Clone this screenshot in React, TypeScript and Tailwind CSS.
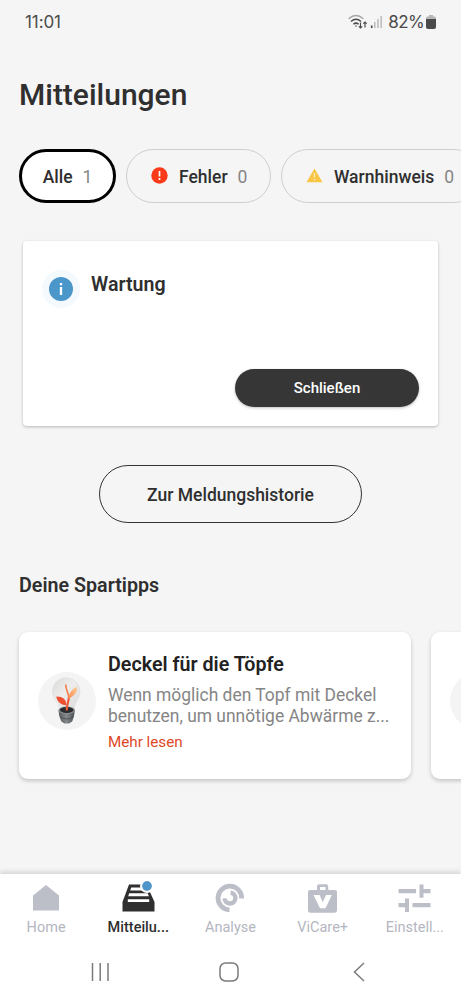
import type { ReactNode } from "react";

const HomeIcon = () => (
  <svg width="26" height="26" viewBox="0 0 26 26" fill="currentColor">
    <path d="M13 0 26 10.5V25.5H0V10.5Z" />
  </svg>
);

const InboxIcon = () => (
  <svg width="33" height="28" viewBox="0 0 33 28" fill="currentColor">
    <path d="M7 0.5H19.5A6 6 0 0 0 25.5 7H27.5L32.5 18V27.5H0.5V18Z" />
    <path d="M9.2 3.6H20L21.5 6.6H8.2ZM7.2 9.2H25.8L26.8 12.2H6.2ZM5.8 15.2H27.2V18H5.8Z" fill="#fff" />
  </svg>
);

const AnalyseIcon = () => (
  <svg width="30" height="30" viewBox="0 0 30 30" fill="none" stroke="currentColor" strokeWidth="4.8">
    <path d="M26.6 15.5A11.8 11.8 0 1 0 14.5 26.8" />
    <path d="M15.6 9.8A5.4 5.4 0 1 1 9.6 15.4" strokeWidth="4.4" />
  </svg>
);

const ViCareIcon = () => (
  <svg width="29" height="29" viewBox="0 0 29 29" fill="currentColor">
    <path fillRule="evenodd" d="M9 6V2.5Q9 .3 11.2.3H18Q20.2.3 20.2 2.5V6H27Q29 6 29 8V26.5Q29 28.8 26.7 28.8H2.3Q0 28.8 0 26.5V8Q0 6 2 6ZM12 6H17.5V3H12Z" />
    <path d="M5.5 11H11.6L14.8 18.3 18 11H23.8L17.5 24.3H12Z" fill="#fff" />
  </svg>
);

const SettingsIcon = () => (
  <svg width="33" height="29" viewBox="0 0 33 29" fill="currentColor">
    <path d="M.5 5H18V9.3H.5ZM21.5.5H25.5V5H32.5V9.3H25.5V13.8H21.5ZM7 14.5H11V28H7V23.3H.5V19H7ZM14.5 19H32.5V23.3H14.5Z" />
  </svg>
);

const BulbPlant = () => (
  <svg width="58" height="58" viewBox="0 0 58 58">
    <defs>
      <linearGradient id="glass" x1="0" y1="0" x2="1" y2="1">
        <stop offset="0" stopColor="#dadada" />
        <stop offset=".45" stopColor="#eeedec" />
        <stop offset="1" stopColor="#dadada" />
      </linearGradient>
      <linearGradient id="leaf" x1="1" y1="0" x2="0" y2="1">
        <stop offset="0" stopColor="#ffcb96" />
        <stop offset="1" stopColor="#f58a50" />
      </linearGradient>
      <linearGradient id="pot">
        <stop offset="0" stopColor="#55595c" />
        <stop offset=".5" stopColor="#85898b" />
        <stop offset="1" stopColor="#4a4f52" />
      </linearGradient>
    </defs>
    <circle cx="29" cy="29" r="29" fill="#f4f4f4" />
    <path d="M21.5 38C21.5 30 14.5 27 14.5 19.5A13.7 13.7 0 0 1 42 19.5C42 27 36 30 36 38Z" fill="url(#glass)" stroke="#dcdcdc" strokeWidth=".6" />
    <path d="M20.5 38.5H36.8L36 44 34.2 49.5 31 51.5H26.5L23.3 49.5 21.3 44Z" fill="url(#pot)" />
    <ellipse cx="28.7" cy="38.3" rx="8.2" ry="3.8" fill="#8b8f91" />
    <ellipse cx="28.7" cy="38" rx="6.9" ry="2.9" fill="#292c2e" />
    <path d="M22 45Q29 49 35.5 45" fill="none" stroke="#44494c" strokeWidth=".8" />
    <path d="M28.8 38.5C28.5 32 31 29 31 24.5" fill="none" stroke="#ee5738" strokeWidth="2.2" />
    <path d="M31 26.5C30.8 21 28 19 27.7 12.5" fill="none" stroke="#f3854f" strokeWidth="1.7" />
    <path d="M30.8 27C30.5 20.5 35 16.5 38.8 15 40 21 35.5 23.5 30.8 27Z" fill="url(#leaf)" />
    <path d="M28.5 33.3C22 33 19 29 18.3 24.5 24.5 24.3 28 27 28.5 33.3Z" fill="#ef5030" />
  </svg>
);

const StatusBar = () => (
  <header className="flex h-11 items-center justify-between pl-[25px] pr-[25px] text-[#4b4b4b]">
    <span className="mt-0.5 font-['Inter'] text-[17px] tracking-[-0.1px]">11:01</span>
    <div className="flex items-center">
      <svg className="mr-1" width="36" height="16" viewBox="0 0 36 16" fill="none" stroke="currentColor" strokeWidth="1.5">
        <path d="M.7 4.7Q8-1.8 15.3 4.7" stroke="#a6a6a6" />
        <path d="M3 7.5Q8 3 13 7.5M5.4 10.2Q8 8 10.6 10.2" />
        <circle cx="8" cy="12" r=".8" fill="currentColor" stroke="none" />
        <path d="M12.5 8.5V14M10.8 12.3 12.5 14 14.2 12.3M17 13.5V8M15.3 9.7 17 8 18.7 9.7" strokeWidth="1.2" />
        <path d="M23.7 11.5V14" strokeWidth="1.7" />
        <path d="M26.8 8V14M30 5V14M33.2 2V14" stroke="#bbb" />
      </svg>
      <span className="mt-0.5 font-['Inter'] text-[17px] tracking-[-0.6px]">82%</span>
      <svg className="ml-0.5" width="10" height="14" viewBox="0 0 10 14">
        <path d="M3 0H7V1.5H8.5Q10 1.5 10 3V5H0V3Q0 1.5 1.5 1.5H3Z" fill="#b6b6b6" />
        <path d="M0 4H10V12Q10 14 8 14H2Q0 14 0 12Z" fill="currentColor" />
      </svg>
    </div>
  </header>
);

const Tip = ({ children }: { children?: ReactNode }) => (
  <article className="flex h-[147px] w-[392px] shrink-0 rounded-[9px] bg-white pl-[19px] pt-[21px] shadow-[0_2px_4px_rgba(0,0,0,0.2)]">
    {children}
  </article>
);

const tabs = [
  { label: "Home", icon: <HomeIcon /> },
  { label: "Mitteilu...", icon: <InboxIcon />, active: true },
  { label: "Analyse", icon: <AnalyseIcon /> },
  { label: "ViCare+", icon: <ViCareIcon /> },
  { label: "Einstell...", icon: <SettingsIcon /> },
];

export default function App() {
  return (
    <div className="flex h-[999px] w-[461px] flex-col overflow-hidden bg-[#f5f5f5] font-['Roboto',sans-serif] text-[#2f2f2f]">
      <StatusBar />

      <main className="flex-1">
        <h1 className="mt-[31px] pl-[19px] text-[30px] leading-10 font-medium">Mitteilungen</h1>

        {/* Filters */}
        <div className="mt-[34px] flex h-[53.5px] gap-2.5 overflow-hidden pl-[19px] text-[17.5px]">
          <button className="flex w-[97px] shrink-0 items-center justify-center gap-2.5 rounded-full border-3 border-black bg-white pt-0.5">
            <span className="font-medium">Alle</span>
            <span className="text-[#858585]">1</span>
          </button>
          <button className="flex w-[145px] shrink-0 items-center rounded-full border-[1.5px] border-[#cecece] pl-6">
            <svg width="17" height="17" viewBox="0 0 17 17">
              <circle cx="8.5" cy="8.5" r="8.2" fill="#fa3b19" />
              <path d="M8.5 4V9.5M8.5 11V13" stroke="#fff" strokeWidth="1.7" />
            </svg>
            <span className="ml-[11px] pt-0.5 font-medium">Fehler</span>
            <span className="ml-2.5 pt-0.5 text-[#858585]">0</span>
          </button>
          <button className="flex w-[200px] shrink-0 items-center rounded-full border-[1.5px] border-[#cecece] pl-6">
            <svg width="17" height="15" viewBox="0 0 17 15">
              <path d="M8.5.5 16.5 14.3H.5Z" fill="#f8c544" />
              <path d="M8.5 5V9.5M8.5 11V12.5" stroke="#fce9b8" strokeWidth="1.4" />
            </svg>
            <span className="ml-[11px] pt-0.5 font-medium">Warnhinweis</span>
            <span className="ml-2.5 pt-0.5 text-[#858585]">0</span>
          </button>
        </div>

        {/* Message */}
        <section className="mx-[23px] mt-[38.5px] flex h-[185px] flex-col justify-between rounded bg-white pt-7 pr-[19px] pb-[19px] pl-[19px] shadow-[0_1px_3px_rgba(0,0,0,0.25)]">
          <div className="flex">
            <div className="mt-px flex size-[38px] items-center justify-center rounded-full bg-[#f3f9fd]">
              <svg width="24" height="24" viewBox="0 0 24 24">
                <circle cx="12" cy="12" r="12" fill="#4b97ca" />
                <path d="M12 6V8.2M12 10V18" stroke="#fff" strokeWidth="2.3" />
              </svg>
            </div>
            <h2 className="ml-[11px] pt-0.5 text-[19.6px] leading-7 font-semibold">Wartung</h2>
          </div>
          <button className="h-[38px] w-[184px] self-end rounded-full bg-[#363636] pt-px text-[15px] font-medium text-white shadow-[0_1px_3px_rgba(0,0,0,0.25)]">
            Schließen
          </button>
        </section>

        <button className="mt-[39px] ml-[99px] block h-[58px] w-[263px] rounded-full border-[1.5px] border-[#333] pt-0.5 text-[17.5px] font-medium">
          Zur Meldungshistorie
        </button>

        <h2 className="mt-[49px] pl-[19px] text-[19.7px] leading-7 font-semibold">Deine Spartipps</h2>

        <div className="mt-8 flex gap-5 pl-[19px]">
          <Tip>
            <div className="mt-[19px] shrink-0">
              <BulbPlant />
            </div>
            <div className="ml-3 whitespace-nowrap">
              <h3 className="text-[19.7px] leading-6 font-semibold text-[#222]">Deckel für die Töpfe</h3>
              <p className="mt-2 text-[17.45px] leading-[21px] text-[#858585]">
                Wenn möglich den Topf mit Deckel
                <br />
                benutzen, um unnötige Abwärme z...
              </p>
              <a className="mt-[3px] block text-[15.2px] leading-6 text-[#de4828]">Mehr lesen</a>
            </div>
          </Tip>
          <Tip>
            <div className="mt-[19px] size-[58px] rounded-full bg-[#f4f4f4]" />
          </Tip>
        </div>
      </main>

      <footer className="h-[125px] bg-white shadow-[0_-2px_5px_rgba(0,0,0,0.15)]">
        <nav className="flex h-[69px]">
          {tabs.map((tab) => (
            <div key={tab.label} className={`flex w-[92.2px] flex-col items-center text-[14.5px] ${tab.active ? "font-medium text-[#2f2f2f]" : "text-[#b4b6bf]"}`}>
              <div className={`relative mt-[7px] flex h-[34px] items-center ${tab.active ? "" : "text-[#bdbfc8]"}`}>
                {tab.icon}
                {tab.active && <span className="absolute top-0 right-[3px] size-2.5 rounded-full bg-[#5095c9] outline-2 outline-white" />}
              </div>
              <span className="mt-[3px] leading-5">{tab.label}</span>
            </div>
          ))}
        </nav>
        <div className="flex h-[58px] items-center pl-[91px] text-[#7b7b7b]">
          <svg width="19" height="20" viewBox="0 0 19 20" stroke="currentColor" strokeWidth="1.5">
            <path d="M1.5 1V19M9.2 1V19M17 1V19" />
          </svg>
          <svg className="ml-[109px]" width="20" height="20" viewBox="0 0 20 20" fill="none" stroke="currentColor" strokeWidth="1.5">
            <rect x="1" y="1" width="18" height="18" rx="5.5" />
          </svg>
          <svg className="ml-[114px]" width="12" height="20" viewBox="0 0 12 20" fill="none" stroke="currentColor" strokeWidth="1.5">
            <path d="M11 1 1.5 10 11 19" />
          </svg>
        </div>
      </footer>
    </div>
  );
}
